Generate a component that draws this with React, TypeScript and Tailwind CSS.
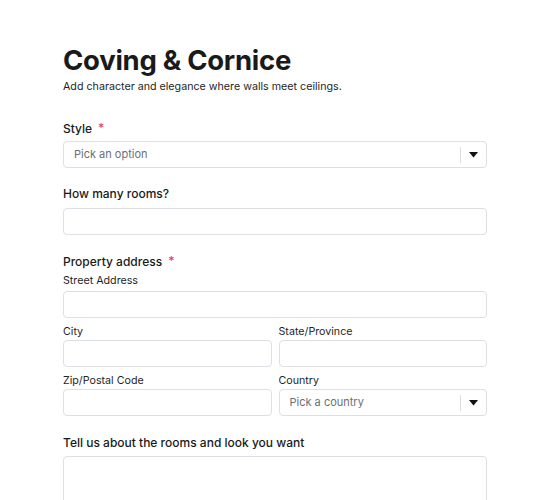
import React from "react";

const Asterisk = () => (
  <span className="ml-[6px] text-[#ec3a78] text-[12px] leading-none relative top-[-1px]">*</span>
);

const Caret = () => (
  <svg width="9" height="6" viewBox="0 0 9 6" className="block">
    <path d="M0 0 L9 0 L4.5 5.5 Z" fill="#111" />
  </svg>
);

const Input = () => (
  <div className="h-[27px] w-full rounded-[4px] border border-[#dcdfe4] bg-white" />
);

const Select = ({ placeholder }: { placeholder: string }) => (
  <div className="h-[27px] w-full rounded-[4px] border border-[#dcdfe4] bg-white flex items-center">
    <span className="flex-1 pl-[10px] text-[11px] text-[#6b6f76]">{placeholder}</span>
    <div className="w-px h-[16px] bg-[#dcdfe4]" />
    <div className="w-[25px] flex items-center justify-center">
      <Caret />
    </div>
  </div>
);

const BigLabel = ({ children, required }: { children: React.ReactNode; required?: boolean }) => (
  <div className="text-[12px] font-medium leading-[20px] text-[#1a1a1a] flex items-center">
    {children}
    {required && <Asterisk />}
  </div>
);

const SmallLabel = ({ children }: { children: React.ReactNode }) => (
  <div className="text-[10.7px] leading-[16px] text-[#1f1f1f]">{children}</div>
);

export default function App() {
  return (
    <div className="min-h-[500px] bg-white" style={{ fontFamily: "Inter, 'Noto Sans', sans-serif" }}>
      <div className="w-[424px] mx-auto pt-[43px]">
        <h1 className="text-[27.5px] font-bold leading-[34px] tracking-[-0.01em] text-[#1a1a1a]">
          Coving &amp; Cornice
        </h1>
        <p className="text-[10.7px] leading-[16px] text-[#1f1f1f] mt-[2px]">
          Add character and elegance where walls meet ceilings.
        </p>

        <div className="mt-[24px]">
          <BigLabel required>Style</BigLabel>
          <div className="mt-[2px]">
            <Select placeholder="Pick an option" />
          </div>
        </div>

        <div className="mt-[16px]">
          <BigLabel>How many rooms?</BigLabel>
          <div className="mt-[4px]">
            <Input />
          </div>
        </div>

        <div className="mt-[17px]">
          <BigLabel required>Property address</BigLabel>
          <div className="mt-[1px]"><SmallLabel>Street Address</SmallLabel></div>
          <div className="mt-[2px]">
            <Input />
          </div>
          <div className="grid grid-cols-2 gap-x-[7px]">
            <div>
              <div className="mt-[6px]"><SmallLabel>City</SmallLabel></div>
              <div><Input /></div>
            </div>
            <div>
              <div className="mt-[6px]"><SmallLabel>State/Province</SmallLabel></div>
              <div><Input /></div>
            </div>
            <div>
              <div className="mt-[6px]"><SmallLabel>Zip/Postal Code</SmallLabel></div>
              <div><Input /></div>
            </div>
            <div>
              <div className="mt-[6px]"><SmallLabel>Country</SmallLabel></div>
              <div><Select placeholder="Pick a country" /></div>
            </div>
          </div>
        </div>

        <div className="mt-[17px]">
          <BigLabel>Tell us about the rooms and look you want</BigLabel>
          <div className="mt-[3px] h-[80px] w-full rounded-[4px] border border-[#dcdfe4] bg-white" />
        </div>
      </div>
    </div>
  );
}
